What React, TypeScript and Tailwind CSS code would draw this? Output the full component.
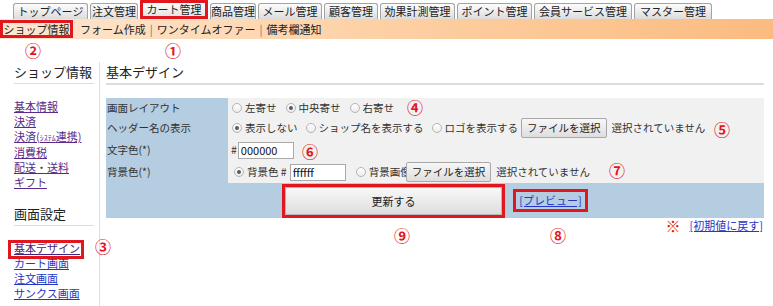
import React from "react";

function Tab({ className, children }: { className: string; children: React.ReactNode }) {
  return (
    <div
      className={
        "flex h-[16px] items-center justify-center rounded-t-[3px] border border-b-0 border-[#a3a3a3] bg-linear-to-b from-[#fdfdfd] to-[#dcdcdc] text-[11px] leading-none text-[#222] " +
        className
      }
    >
      {children}
    </div>
  );
}

function Radio({ checked }: { checked?: boolean }) {
  return (
    <span className="inline-flex h-[10px] w-[10px] shrink-0 items-center justify-center rounded-full border border-[#b4b4b4] bg-linear-to-b from-[#ffffff] to-[#ececec]">
      {checked ? <span className="h-[4px] w-[4px] rounded-full bg-[#5a5a5a]" /> : null}
    </span>
  );
}

function FileBtn() {
  return (
    <span className="inline-flex h-[20px] items-center rounded-[2px] border border-[#a8a8a8] bg-linear-to-b from-[#f7f7f7] to-[#dedede] px-[5px] text-[10.5px] text-[#222]">
      ファイルを選択
    </span>
  );
}

export default function App() {
  return (
    <div className="relative h-[306px] w-[773px] overflow-hidden bg-white font-['Noto_Sans_CJK_JP','Noto_Sans',sans-serif] text-[11px] text-[#333]">
      {/* top tabs */}
      <div className="flex h-[19px] items-end gap-[2px] pl-[13px]">
        <Tab className="w-[75px]">トップページ</Tab>
        <Tab className="w-[48px]">注文管理</Tab>
        <div className="flex h-[19px] w-[68px] border-[3px] border-[#e2161d]">
          <div className="flex h-full w-full items-center justify-center bg-linear-to-b from-[#fdfdfd] to-[#e4e4e4] text-[11px] leading-none text-[#222]">
            カート管理
          </div>
        </div>
        <Tab className="w-[46px]">商品管理</Tab>
        <Tab className="w-[64px]">メール管理</Tab>
        <Tab className="w-[54px]">顧客管理</Tab>
        <Tab className="w-[75px]">効果計測管理</Tab>
        <Tab className="w-[75px]">ポイント管理</Tab>
        <Tab className="w-[98px]">会員サービス管理</Tab>
        <Tab className="w-[78px]">マスター管理</Tab>
      </div>

      {/* orange sub bar */}
      <div className="flex h-[20px] items-center bg-linear-to-r from-[#fee7d0] via-[#fdd0a4] to-[#fbbb80] text-[11px] text-[#222]">
        <div className="flex h-[18px] w-[73px] items-center justify-center border-[3px] border-[#e2161d] leading-none">
          ショップ情報
        </div>
        <div className="ml-[7px] flex items-center leading-none">
          <span>フォーム作成</span>
          <span className="mx-[4px] text-[#777]">|</span>
          <span>ワンタイムオファー</span>
          <span className="mx-[4px] text-[#777]">|</span>
          <span>備考欄通知</span>
        </div>
      </div>

      {/* body */}
      <div className="flex pt-[23px]">
        {/* sidebar */}
        <div className="h-[244px] w-[100px] shrink-0 border-r border-[#dedede] pl-[14px] pr-[5px]">
          <div className="border-b border-[#dddddd] pb-[1px] text-[13px] leading-[20px] text-[#222]">ショップ情報</div>
          <div className="mt-[15px] flex flex-col items-start leading-[15px] text-[#5a2a8a]">
            <span className="underline">基本情報</span>
            <span className="underline">決済</span>
            <span className="underline">
              決済(<span className="text-[8px]">ｼｽﾃﾑ</span>連携)
            </span>
            <span className="underline">消費税</span>
            <span className="underline">配送・送料</span>
            <span className="underline">ギフト</span>
          </div>
          <div className="mt-[14px] border-b border-[#dddddd] pb-[1px] text-[13px] leading-[20px] text-[#222]">画面設定</div>
          <div className="mt-[15px] flex flex-col items-start leading-[15px]">
            <span className="relative text-[#4a2378] underline">
              基本デザイン
              <span className="absolute -bottom-[3px] -left-[6px] -right-[4px] -top-[1px] border-[3px] border-[#e2161d]" />
            </span>
            <span className="text-[#2536c8] underline">カート画面</span>
            <span className="text-[#2536c8] underline">注文画面</span>
            <span className="text-[#2536c8] underline">サンクス画面</span>
          </div>
        </div>

        {/* main */}
        <div className="flex-1 pl-[6px] pr-[9px]">
          <div className="border-b-2 border-[#dddddd] pb-[1px] text-[13px] leading-[20px] text-[#222]">基本デザイン</div>

          <div className="mt-[13px] bg-[#b4cde1] text-[10.5px]">
            <div className="grid grid-cols-[122px_1fr]">
              <div className="flex h-[19px] items-center pl-[1px]">画面レイアウト</div>
              <div className="flex h-[19px] items-center gap-[3px] bg-[#f1f1f1] pl-[4px]">
                <Radio />
                <span>左寄せ</span>
                <span className="ml-[3px]" />
                <Radio checked />
                <span>中央寄せ</span>
                <span className="ml-[3px]" />
                <Radio />
                <span>右寄せ</span>
              </div>

              <div className="flex h-[22px] items-center pl-[1px]">ヘッダー名の表示</div>
              <div className="flex h-[22px] items-center gap-[3px] bg-[#f1f1f1] pl-[4px]">
                <Radio checked />
                <span>表示しない</span>
                <span className="ml-[2px]" />
                <Radio />
                <span>ショップ名を表示する</span>
                <span className="ml-[2px]" />
                <Radio />
                <span>ロゴを表示する</span>
                <span className="-ml-[3px]" />
                <FileBtn />
                <span className="ml-[2px]">選択されていません</span>
              </div>

              <div className="flex h-[22px] items-center pl-[1px]">文字色(*)</div>
              <div className="flex h-[22px] items-center bg-[#f1f1f1] pl-[3px]">
                <span>#</span>
                <span className="ml-[1px] flex h-[17px] w-[56px] items-center border border-[#a9a9a9] bg-white px-[2px] text-[11px] text-[#111]">
                  000000
                </span>
              </div>

              <div className="flex h-[22px] items-center pl-[1px]">背景色(*)</div>
              <div className="flex h-[22px] items-center gap-[3px] bg-[#f1f1f1] pl-[6px]">
                <Radio checked />
                <span>背景色 #</span>
                <span className="flex h-[17px] w-[56px] items-center border border-[#a9a9a9] bg-white px-[2px] text-[11px] text-[#111]">
                  ffffff
                </span>
                <span className="ml-[4px]" />
                <Radio />
                <span>背景画像</span>
                <span className="relative -ml-[8px]">
                  <FileBtn />
                </span>
                <span className="ml-[2px]">選択されていません</span>
              </div>
            </div>

            <div className="flex h-[35px] items-end justify-center gap-[8px]">
              <div className="flex h-[34px] w-[223px] border-[3px] border-[#e2161d]">
                <div className="flex h-full w-full items-center justify-center rounded-[2px] border border-[#b8b8b8] bg-linear-to-b from-[#f8f8f8] to-[#dedede] text-[11px] text-[#222]">
                  更新する
                </div>
              </div>
              <div className="mb-[6px] flex h-[23px] w-[75px] items-center justify-center border-[3px] border-[#e2161d]">
                <span className="text-[11px] text-[#2536c8] underline">[プレビュー]</span>
              </div>
            </div>
          </div>

          <div className="flex h-[15px] items-center justify-end pr-[1px]">
            <span className="text-[15px] leading-none text-[#e2161d]">※</span>
            <span className="ml-[9px] text-[#2536c8] underline">[初期値に戻す]</span>
          </div>
        </div>
      </div>

      {/* annotation numbers */}
      <span className="absolute left-[165px] top-[42px] w-[16px] text-center text-[16px] font-bold leading-[16px] text-[#e2161d]">①</span>
      <span className="absolute left-[25px] top-[42px] w-[16px] text-center text-[16px] font-bold leading-[16px] text-[#e2161d]">②</span>
      <span className="absolute left-[95px] top-[238px] w-[16px] text-center text-[16px] font-bold leading-[16px] text-[#e2161d]">③</span>
      <span className="absolute left-[407px] top-[99px] w-[16px] text-center text-[16px] font-bold leading-[16px] text-[#e2161d]">④</span>
      <span className="absolute left-[714px] top-[121px] w-[16px] text-center text-[16px] font-bold leading-[16px] text-[#e2161d]">⑤</span>
      <span className="absolute left-[302px] top-[143px] w-[16px] text-center text-[16px] font-bold leading-[16px] text-[#e2161d]">⑥</span>
      <span className="absolute left-[609px] top-[162px] w-[16px] text-center text-[16px] font-bold leading-[16px] text-[#e2161d]">⑦</span>
      <span className="absolute left-[550px] top-[227px] w-[16px] text-center text-[16px] font-bold leading-[16px] text-[#e2161d]">⑧</span>
      <span className="absolute left-[394px] top-[227px] w-[16px] text-center text-[16px] font-bold leading-[16px] text-[#e2161d]">⑨</span>
    </div>
  );
}
